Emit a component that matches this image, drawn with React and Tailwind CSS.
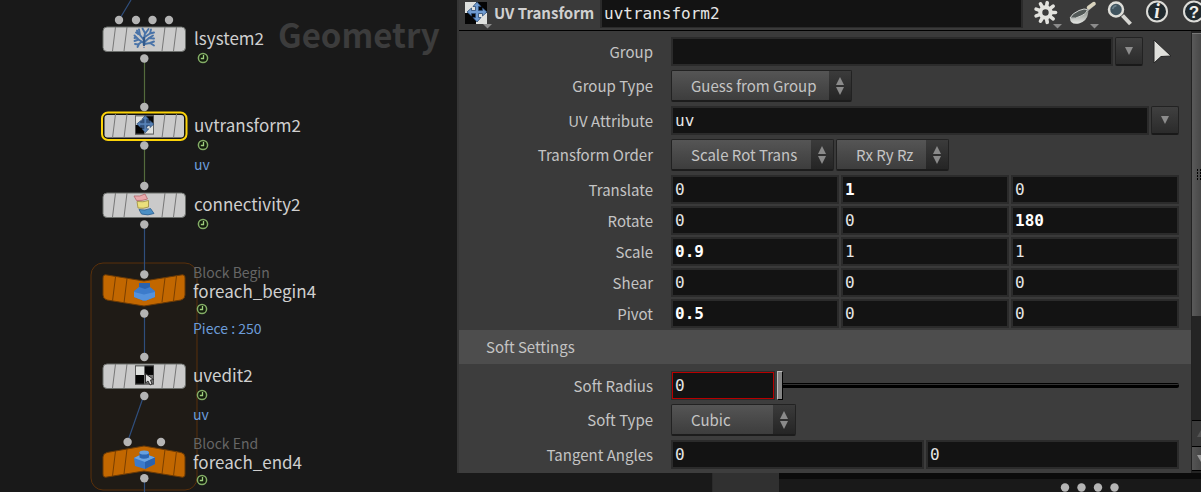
import React from "react";

const SANS = "font-['Noto_Sans_CJK_SC','Noto_Sans',sans-serif]";
const MONO = "font-['DejaVu_Sans_Mono',monospace]";

/* ---------- node graph ---------- */

function Dot({ x, y }) {
  return <circle cx={x} cy={y} r="4.2" fill="#b4b4b4" />;
}

function FlagLines({ skew = 0 }) {
  return (
    <path
      d={
        skew === 0
          ? "M13.5 1 10.5 25M25 1 22 25M63 1 60 25M74.500 1 71.500 25"
          : skew > 0
          ? "M13.500 3 10.500 27M25 4.500 22 29M63 4 60 28M74.500 2 71.500 27"
          : "M13.500 5 10.500 30M25 3 22 28M63 3.500 60 28M74.500 5 71.500 30"
      }
      stroke={skew === 0 ? "#777" : "#7a3f00"}
      fill="none"
    />
  );
}

function Tile({ x, y, selected, children }) {
  return (
    <g transform={`translate(${x} ${y})`}>
      {selected && (
        <rect x="0" y="-.5" width="84.500" height="27.500" rx="6" fill="#111" stroke="#fcd309" strokeWidth="2" />
      )}
      {selected ? (
        <rect x="2.500" y="2" width="79.500" height="22.500" rx="3" fill="#cacaca" />
      ) : (
        <rect x="1" y="1" width="82.500" height="24.500" rx="4" fill="#cacaca" stroke="#6d706d" />
      )}
      <FlagLines />
      {children}
    </g>
  );
}

function Block({ x, y, up, children }) {
  return (
    <g transform={`translate(${x} ${y})`}>
      <path
        d={
          up
            ? "M5 6.500 42 0 79 6.500Q83 7.500 83 11V28Q83 32 79 31L42 25 5 31Q1 32 1 28V11Q1 7.500 5 6.500Z"
            : "M5 1 42 7 79 1Q83 0 83 4V21Q83 25 79 26L42 32 5 26Q1 25 1 21V4Q1 0 5 1Z"
        }
        fill="#c26700"
        stroke="#6b3a05"
      />
      <FlagLines skew={up ? -1 : 1} />
      {children}
    </g>
  );
}

function Coral() {
  return (
    <g fill="none" stroke="#4973a8" strokeWidth="1.900" strokeLinecap="round">
      <path d="M42 21V13M42 17 36.500 13.500 32.500 15M36.500 13.500 32.500 9.500M34.500 11.500 32.500 12M42 14 38 9 37 3.500M38 9 34 6.500M36 8 35 4.500M42 13 43 7 40.500 2.500M43 8 46.500 3M42.800 11 48 7.500 49 3.500M48 7.500 52 6.500M42.500 16 47 12 52 12.500M47 12 51 9.500M42.500 18 48 17 52 19.500M48 17 52 15.500M39.500 16 36 18.500 33 18M37 18 35.500 21" />
      <path d="M39.500 22.500 42 19 44.500 22.500" stroke="#d9c9c0" strokeWidth="1.500" />
      <path d="M42 19V12" stroke="#34598a" strokeWidth="2.400" />
    </g>
  );
}

function MoveCross({ fill = "#6f9bd0" }) {
  return (
    <path
      d="M11 1 15 5.500H12.500V9.500H16.500V7L21 11 16.500 15V12.500H12.500V16.500H15L11 21 7 16.500H9.500V12.500H5.500V15L1 11 5.500 7V9.500H9.500V5.500H7Z"
      fill={fill}
      stroke="#2b4a73"
      strokeWidth="0.800"
    />
  );
}

function Checker() {
  return (
    <>
      <rect width="22" height="22" fill="#050505" />
      <path d="M0 0H11V11H0ZM11 11H22V22H11Z" fill="#dfe1df" />
    </>
  );
}

function UvGlyph() {
  return (
    <g transform="translate(33 2.500) scale(.86)">
      <Checker />
      <rect x=".5" y=".5" width="21" height="21" fill="none" stroke="#555" />
      <path d="M4 9 8 5 13 2 18 7 16 12 11 16 7 14Z" fill="#35527c" />
      <g transform="translate(1 -1)"><MoveCross fill="#5680b5" /></g>
    </g>
  );
}

function Pieces() {
  return (
    <g strokeWidth=".8">
      <path d="M32 4Q38 5 43 2L45.500 7Q40 9 34.500 8.500Z" fill="#e9a8ab" stroke="#b5666b" />
      <path d="M35 9.500Q41 10.500 46.500 8.500V15Q41 17 36 16Z" fill="#eadf7c" stroke="#9a8a38" />
      <path d="M37 17.500Q43 19 48.500 16.500L52 21.500Q46 24 39.500 22Z" fill="#4b8fc4" stroke="#2b5d8d" />
    </g>
  );
}

function EditGlyph() {
  return (
    <g>
      <g transform="translate(33 2.500) scale(.86)">
        <Checker />
        <rect x="11" y="11" width="11" height="11" fill="#777" />
        <rect x=".5" y=".5" width="21" height="21" fill="none" stroke="#444" />
      </g>
      <path d="M43.500 10.500V20L46 18 48 22 50 21 48.500 17 51.500 16.500Z" fill="#ddd" stroke="#222" strokeWidth=".9" />
    </g>
  );
}

function Brick({ y, low }) {
  return (
    <g transform={`translate(31 ${y})`}>
      <path d={low ? "M6 1H17V5L22 9V15L13 18.500H10L1 15V9L6 5Z" : "M1 8 6 5.500H16.500L22 7.500V14L12 19 2 16Z"} fill="#3c7bcb" />
      <path d={low ? "M1 10 11 12.500 22 10V15L13 18.500H10L1 15Z" : "M1 8 6 5.500H16.500L22 7.500 12 12Z"} fill={low ? "#5592dc" : "#6ba5e4"} />
      <path d={low ? "M6 1H17V5L12 7 6 5Z" : "M12 12 22 7.500V14L12 19Z"} fill="#2a62ae" />
      {!low && (
        <>
          <path d="M6.500 2.500V7.500Q10.500 10 16 7.500V2.500Z" fill="#2c66b3" />
          <ellipse cx="11.200" cy="2.500" rx="4.800" ry="2" fill="#67a0e0" />
        </>
      )}
    </g>
  );
}

function Graph() {
  return (
    <svg className="absolute inset-0 h-full w-full" aria-hidden="true">
      <rect x="91" y="263" width="106" height="227" rx="12" fill="#1f1b16" stroke="#5a300a" />
      <g fill="none" strokeWidth="1.200">
        <path d="M144.500 58V107M144.500 145V186" stroke="#546b3c" />
        <path d="M119 20 131 0M144.500 224V275M144.500 313V357M144 395 127.500 442M144.500 478V492" stroke="#2f4e7c" />
      </g>
      <Tile x={102} y={26}><Coral /></Tile>
      <Tile x={102} y={113} selected><UvGlyph /></Tile>
      <Tile x={102} y={192}><Pieces /></Tile>
      <Block x={102} y={274}><Brick y={8} low /></Block>
      <Tile x={102} y={363}><EditGlyph /></Tile>
      <Block x={102} y={446} up><Brick y={4} /></Block>
      {[
        [119, 20], [136, 20], [152.5, 20], [169, 20], [144.3, 58.500],
        [144.3, 107], [144.3, 145.500], [144.3, 186], [144.3, 224.500],
        [144.3, 274.500], [144.3, 313.500], [144.3, 357], [144.3, 396],
        [127.600, 442], [161, 442], [144.3, 478.300],
      ].map(([x, y]) => (
        <Dot key={`${x}-${y}`} x={x} y={y} />
      ))}
    </svg>
  );
}

function Clock() {
  return (
    <svg className="ml-[3px] block size-3" viewBox="0 0 12 12" fill="none" aria-hidden="true">
      <circle cx="6" cy="6" r="4.600" fill="#111b0c" stroke="#83ad66" strokeWidth="1.500" />
      <path d="M6.500 3V6.500H3.800" stroke="#9fce7e" strokeWidth="1.300" />
    </svg>
  );
}

function NodeLabel({ place, kind, name, note }) {
  return (
    <div className={`absolute whitespace-nowrap ${place}`}>
      {kind && <div className="text-[14px] leading-[18px] text-[#666]">{kind}</div>}
      <div className="text-[17px] leading-[20px] text-[#cfcfcf]">{name}</div>
      <div className={kind ? "pt-[2px]" : "pt-1"}><Clock /></div>
      {note && <div className="pt-1 text-[14px] leading-[18px] text-[#6c9cd9]">{note}</div>}
    </div>
  );
}

/* ---------- parameter controls ---------- */

const FIELD =
  "h-[29px] min-w-0 flex-1 border-2 border-[#2b2b2b] bg-[#131313] pl-[2px] text-[16px] leading-[24px] text-[#e6e6e6] outline-none";

function Row({ label, id, children, tight }) {
  return (
    <div className={`grid grid-cols-[194px_minmax(0,1fr)] items-center gap-x-[18px] pr-3 ${tight ? "mt-[2px]" : "mt-1"}`}>
      <label htmlFor={id} className="text-right text-[15px] leading-[24px] text-[#c4c4c4]">{label}</label>
      <div className="flex items-center gap-[2px]">{children}</div>
    </div>
  );
}

function Fields({ id, label, values }) {
  return values.map((v, i) => (
    <input
      key={i}
      id={i === 0 ? id : undefined}
      aria-label={i === 0 ? undefined : `${label} ${i + 1}`}
      defaultValue={v.replace("*", "")}
      className={`${FIELD} ${MONO} ${v.endsWith("*") ? "font-bold text-white" : ""}`}
    />
  ));
}

function Choice({ id, value, width, label }) {
  return (
    <div className={`relative h-8 ${width}`}>
      <select
        id={id}
        aria-label={label}
        className="h-8 w-full appearance-none rounded-[2px] border border-[#222] border-b-2 border-b-[#1c1c1c] bg-linear-to-b from-[#555] to-[#3d3d3d] pl-[19px] text-[15px] leading-[24px] text-[#c4c4c4] outline-none"
      >
        <option>{value}</option>
      </select>
      <span className="pointer-events-none absolute top-px right-px bottom-[2px] flex w-[22px] items-center justify-center bg-linear-to-b from-[#3b3b3b] to-[#252525]">
        <svg width="8" height="18" viewBox="0 0 8 18" fill="#8a8a8a" aria-hidden="true">
          <path d="M4 0 8 8H0ZM0 10H8L4 18Z" />
        </svg>
      </span>
    </div>
  );
}

function MenuButton({ label }) {
  return (
    <button
      type="button"
      aria-label={label}
      className="flex h-[29px] w-7 shrink-0 items-center justify-center rounded-[2px] border border-[#222] border-b-2 border-b-[#191919] bg-linear-to-b from-[#404040] to-[#2b2b2b]"
    >
      <svg width="8" height="8" viewBox="0 0 8 8" fill="#8c8c8c" aria-hidden="true"><path d="M0 0H8L4 8Z" /></svg>
    </button>
  );
}

function Drop() {
  return <path d="M19 24H28L23.500 28.500Z" fill="#8c8c8c" />;
}

function ToolButton({ label, children }) {
  return (
    <button type="button" aria-label={label} className="h-[30px] w-[26px] shrink-0">
      <svg width="28" height="30" viewBox="0 0 28 30" className="block overflow-visible" aria-hidden="true">{children}</svg>
    </button>
  );
}

function Toolbar() {
  const teeth = [0, 40, 80, 120, 160, 200, 240, 280, 320];
  return (
    <div className="flex w-[178px] shrink-0 gap-[11px] overflow-hidden pl-[11px]">
      <ToolButton label="Settings">
        <g stroke="#e2e2de" strokeWidth="3.600" strokeLinecap="round">
          {teeth.map((a) => (
            <path key={a} d="M11.500 7V2.500" transform={`rotate(${a + 10} 11.500 12.500)`} />
          ))}
        </g>
        <circle cx="11.500" cy="12.500" r="5.200" fill="none" stroke="#e2e2de" strokeWidth="4" />
        <Drop />
      </ToolButton>
      <ToolButton label="Presets">
        <defs>
          <linearGradient id="ladle" x1="0" y1="0" x2="0" y2="1">
            <stop offset="0" stopColor="#80857f" /><stop offset="1" stopColor="#e4e6e3" />
          </linearGradient>
        </defs>
        <path d="M14 12 24 3.500" stroke="#aaa" strokeWidth="2.500" />
        <path d="M17.500 7.500 23 3.500" stroke="#d9d3bd" strokeWidth="3.500" strokeLinecap="round" />
        <path d="M-1 18Q-1 25 8 23.500 16 21 17 14 18 10 16 9Z" fill="url(#ladle)" />
        <path d="M-1 18Q1 13.500 8 10.500 14 8 16 9.500 17 12 11 15.500 4 19.500-1 18Z" fill="#525957" stroke="#d0d3d0" />
        <Drop />
      </ToolButton>
      <ToolButton label="Search">
        <path d="M14.500 15.500 22.500 24" stroke="#d6d6d2" strokeWidth="4" />
        <circle cx="8" cy="9.500" r="7" fill="#40545f" stroke="#deded9" strokeWidth="2.500" />
        <path d="M4.500 9Q5.500 6 8.500 5.500" stroke="#6b818c" strokeWidth="1.500" fill="none" />
      </ToolButton>
      <ToolButton label="Info">
        <circle cx="12" cy="11.500" r="10" fill="#202a2f" stroke="#dcdcd8" strokeWidth="2" />
        <text x="12" y="18" textAnchor="middle" fill="#eeeeea" className="font-['Liberation_Serif',serif] text-[20px] font-bold italic">i</text>
      </ToolButton>
      <ToolButton label="Help">
        <circle cx="12" cy="11.500" r="10" fill="#202a2f" stroke="#dcdcd8" strokeWidth="2" />
        <text x="12" y="17.500" textAnchor="middle" fill="#eeeeea" className="font-['Liberation_Sans',sans-serif] text-[17px] font-bold">?</text>
      </ToolButton>
    </div>
  );
}

function ScrollBar() {
  return (
    <div className="flex w-[10px] shrink-0 flex-col overflow-hidden border-l border-[#222] bg-[#242424] pt-[2px] pb-[2px]" aria-hidden="true">
      <div className="flex h-[283px] flex-col items-end justify-center border-t border-[#777] bg-linear-to-r from-[#5a5a5a] to-[#484848]">
        <svg width="4" height="12" viewBox="0 0 4 12" fill="#000"><path d="M0 0h1v2h-1zM3 0h1v2h-1zM0 3h1v2h-1zM3 3h1v2h-1zM0 6h1v2h-1zM3 6h1v2h-1zM0 9h1v2h-1zM3 9h1v2h-1z" /></svg>
      </div>
      <div className="flex-1" />
      <div className="flex h-[26px] items-center justify-end border-t border-black bg-[#3a3a3a]">
        <svg width="4" height="7" viewBox="0 0 4 7" fill="#555"><path d="M0 7 4 0V7Z" /></svg>
      </div>
      <div className="flex h-[25px] items-center justify-end border-y border-black bg-linear-to-r from-[#555] to-[#474747]">
        <svg width="4" height="7" viewBox="0 0 4 7" fill="#999"><path d="M0 0H4V7Z" /></svg>
      </div>
    </div>
  );
}

export default function App() {
  return (
    <div className={`flex min-h-screen overflow-hidden bg-[#191919] ${SANS}`}>
      <section aria-label="Network" className="relative min-h-[492px] w-[457px] shrink-0 overflow-hidden">
        <Graph />
        <div className="absolute top-[14px] left-[278px] text-[33px] leading-[40px] font-bold text-[#3c3c3c]">Geometry</div>
        <NodeLabel place="top-[28px] left-[194px]" name="lsystem2" />
        <NodeLabel place="top-[115px] left-[194px]" name="uvtransform2" note="uv" />
        <NodeLabel place="top-[194px] left-[194px]" name="connectivity2" />
        <NodeLabel place="top-[263px] left-[193px]" kind="Block Begin" name="foreach_begin4" note="Piece : 250" />
        <NodeLabel place="top-[365px] left-[193px]" name="uvedit2" note="uv" />
        <NodeLabel place="top-[434px] left-[193px]" kind="Block End" name="foreach_end4" />
      </section>

      <div className="flex min-w-0 flex-1 flex-col">
        <main className="border-l-2 border-[#353535] bg-[#3a3a3a]">
          <header className="flex h-[31px] items-start border-b border-black">
            <button type="button" aria-label="Operator menu" className="ml-[6px] h-[30px] w-[22px] shrink-0">
              <svg width="28" height="30" viewBox="0 0 28 30" className="block overflow-visible" aria-hidden="true">
                <g transform="translate(0 2)"><Checker /><g transform="translate(1 -1)"><MoveCross /></g></g>
                <path d="M18 24H27L22.500 28.500Z" fill="#8c8c8c" />
              </svg>
            </button>
            <label htmlFor="opname" className="ml-[7px] w-[106px] shrink-0 text-[15px] leading-[26px] font-bold whitespace-nowrap text-[#d0d0d0]">UV Transform</label>
            <input id="opname" defaultValue="uvtransform2" className={`h-7 min-w-0 flex-1 border-x-2 border-b border-[#2b2b2b] bg-[#131313] pl-[2px] text-[16px] leading-[26px] text-[#e6e6e6] outline-none ${MONO}`} />
            <Toolbar />
          </header>

          <div className="flex">
            <form className="min-w-0 flex-1">
              <div className="pt-[2px] pb-[2px]">
                <Row label="Group" id="group">
                  <Fields id="group" label="Group" values={[""]} />
                  <MenuButton label="Group menu" />
                  <button type="button" aria-label="Select group" className="ml-2 flex h-[29px] w-[26px] shrink-0 items-center">
                    <svg width="20" height="25" viewBox="0 0 20 25" aria-hidden="true">
                      <path d="M1 1V24L8 17.500 18 17Z" fill="#e0e0dc" stroke="#252525" />
                    </svg>
                  </button>
                </Row>
                <Row label="Group Type" id="gtype"><Choice id="gtype" value="Guess from Group" width="w-[181px]" /></Row>
                <Row label="UV Attribute" id="uvattr">
                  <Fields id="uvattr" label="UV Attribute" values={["uv"]} />
                  <MenuButton label="Attribute menu" />
                </Row>
                <Row label="Transform Order" id="xord">
                  <Choice id="xord" value="Scale Rot Trans" width="w-[163px]" />
                  <Choice id="rord" label="Rotate order" value="Rx Ry Rz" width="w-[113px]" />
                </Row>
                <Row label="Translate" id="t"><Fields id="t" label="Translate" values={["0", "1*", "0"]} /></Row>
                <Row tight label="Rotate" id="r"><Fields id="r" label="Rotate" values={["0", "0", "180*"]} /></Row>
                <Row tight label="Scale" id="s"><Fields id="s" label="Scale" values={["0.9*", "1", "1"]} /></Row>
                <Row tight label="Shear" id="sh"><Fields id="sh" label="Shear" values={["0", "0", "0"]} /></Row>
                <Row tight label="Pivot" id="p"><Fields id="p" label="Pivot" values={["0.5*", "0", "0"]} /></Row>
              </div>
              <h2 className="bg-[#4d4d4d] py-[5px] pl-[27px] text-[15px] leading-[24px] text-[#c4c4c4]">Soft Settings</h2>
              <div className="bg-[#3d3d3d] pt-[3px] pb-1">
                <Row label="Soft Radius" id="rad">
                  <input id="rad" defaultValue="0" className={`h-[29px] w-[104px] shrink-0 border border-[#2b2b2b] bg-[#131313] pl-[3px] text-[16px] leading-[24px] text-[#e6e6e6] shadow-[inset_0_0_0_1px_#b80000] outline-none ${MONO}`} />
                  <input
                    type="range"
                    aria-label="Soft Radius slider"
                    min="0"
                    max="10"
                    defaultValue="0"
                    className="h-[29px] min-w-0 flex-1 appearance-none bg-transparent outline-none [&::-webkit-slider-runnable-track]:h-[5px] [&::-webkit-slider-runnable-track]:rounded-[2px] [&::-webkit-slider-runnable-track]:border-t [&::-webkit-slider-runnable-track]:border-black [&::-webkit-slider-runnable-track]:bg-linear-to-b [&::-webkit-slider-runnable-track]:from-[#333] [&::-webkit-slider-runnable-track]:from-20% [&::-webkit-slider-runnable-track]:to-black [&::-webkit-slider-runnable-track]:to-20% [&::-webkit-slider-thumb]:-mt-[13px] [&::-webkit-slider-thumb]:h-[29px] [&::-webkit-slider-thumb]:w-[6px] [&::-webkit-slider-thumb]:appearance-none [&::-webkit-slider-thumb]:border [&::-webkit-slider-thumb]:border-t-[#bbb] [&::-webkit-slider-thumb]:border-r-black [&::-webkit-slider-thumb]:border-b-black [&::-webkit-slider-thumb]:border-l-[#bbb] [&::-webkit-slider-thumb]:bg-[#858585]"
                  />
                </Row>
                <Row label="Soft Type" id="stype"><Choice id="stype" value="Cubic" width="w-[125px]" /></Row>
                <Row label="Tangent Angles" id="tan"><Fields id="tan" label="Tangent Angles" values={["0", "0"]} /></Row>
              </div>
            </form>
            <ScrollBar />
          </div>
        </main>

        <div className="flex flex-1" aria-hidden="true">
          <div className="w-[256px] border-r border-[#2a2a2a]" />
          <div className="w-[66px] bg-[#303030]" />
          <div className="flex-1 border-t-[6px] border-[#0b0b0b]">
            <svg className="ml-auto block h-[13px] w-[141px]">
              {[5, 21.5, 38, 54.500].map((x) => <Dot key={x} x={x} y={8.500} />)}
            </svg>
          </div>
        </div>
      </div>
    </div>
  );
}
